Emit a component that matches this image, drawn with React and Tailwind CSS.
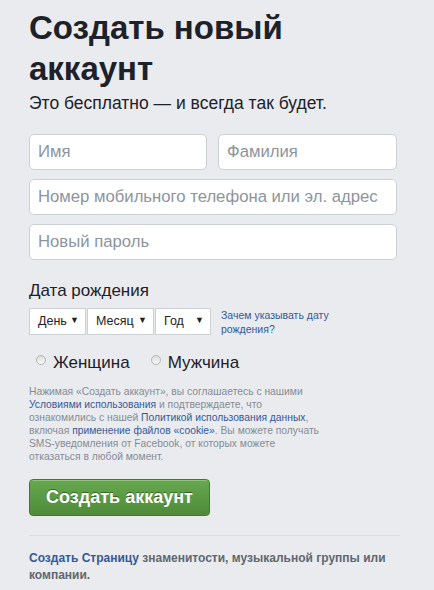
import React from 'react';

const Field = ({ placeholder, className = '' }) => (
    <input
        type="text"
        placeholder={placeholder}
        className={`h-[36px] rounded-[5px] border border-[#ccd0d5] bg-white px-[8px] text-[16.7px] text-[#1d2129] placeholder:text-[#8d949e] outline-none ${className}`}
    />
);

const DateSelect = ({ label, width }) => (
    <div className={`flex h-[27px] items-center justify-between border border-[#ccd0d5] bg-white pl-[8px] pr-[6px] text-[12.5px] text-[#1d2129] ${width}`}>
        <span>{label}</span>
        <span className="text-[9px]">▼</span>
    </div>
);

const Radio = ({ label }) => (
    <label className="flex items-start gap-[7px] text-[17px] leading-[20px] text-[#1d2129]">
        <span className="mt-[2px] h-[10px] w-[10px] rounded-full border border-[#b5b5b5] bg-gradient-to-b from-[#dcdcdc] to-[#fafafa]"></span>
        {label}
    </label>
);

export default function App() {
    return (
        <div className="min-h-[590px] w-[434px] bg-[#e9ebee] pl-[29px] pr-[37px] pt-[7px] font-['Liberation_Sans',Arial,sans-serif]">
            <h1 className="text-[33px] font-bold leading-[41px] text-[#1d2129]">Создать новый аккаунт</h1>
            <p className="mt-[4px] text-[17.5px] leading-[20px] text-[#1d2129]">Это бесплатно — и всегда так будет.</p>

            <div className="mt-[21px] flex flex-col gap-[9px]">
                <div className="flex gap-[11px]">
                    <Field placeholder="Имя" className="w-[178px]" />
                    <Field placeholder="Фамилия" className="w-[179px]" />
                </div>
                <Field placeholder="Номер мобильного телефона или эл. адрес" className="w-[368px]" />
                <Field placeholder="Новый пароль" className="w-[368px]" />
            </div>

            <div className="mt-[21px] text-[17px] leading-[20px] text-[#1d2129]">Дата рождения</div>
            <div className="mt-[5px] flex items-center">
                <div className="flex gap-[1px]">
                    <DateSelect label="День" width="w-[57px]" />
                    <DateSelect label="Месяц" width="w-[67px]" />
                    <DateSelect label="Год" width="w-[56px]" />
                </div>
                <a className="ml-[10px] mt-[2px] text-[10.5px] leading-[14px] text-[#365899]">Зачем указывать дату<br />рождения?</a>
            </div>

            <div className="mt-[17px] flex gap-[21px] pl-[7px]">
                <Radio label="Женщина" />
                <Radio label="Мужчина" />
            </div>

            <p className="mt-[12px] text-[10.3px] leading-[13px] text-[#868c96]">
                Нажимая «Создать аккаунт», вы соглашаетесь с нашими<br />
                <a className="text-[#365899]">Условиями использования</a> и подтверждаете, что<br />
                ознакомились с нашей <a className="text-[#365899]">Политикой использования данных</a>,<br />
                включая <a className="text-[#365899]">применение файлов «cookie»</a>. Вы можете получать<br />
                SMS-уведомления от Facebook, от которых можете<br />
                отказаться в любой момент.
            </p>

            <button className="mt-[16px] h-[37px] w-[181px] rounded-[4px] border border-[#3f7a2c] bg-gradient-to-b from-[#67a84f] to-[#4f8b39] text-[18px] font-bold text-white shadow-[inset_0_1px_0_#8fc27b] [text-shadow:0_-1px_0_rgba(0,0,0,0.4)]">
                Создать аккаунт
            </button>

            <div className="mt-[19px] h-px w-[371px] bg-[#dadde1]"></div>

            <p className="mt-[14px] w-[371px] text-[12px] font-bold leading-[17px] text-[#606770]">
                <span className="text-[#365899]">Создать Страницу</span> знаменитости, музыкальной группы или компании.
            </p>
        </div>
    );
}
